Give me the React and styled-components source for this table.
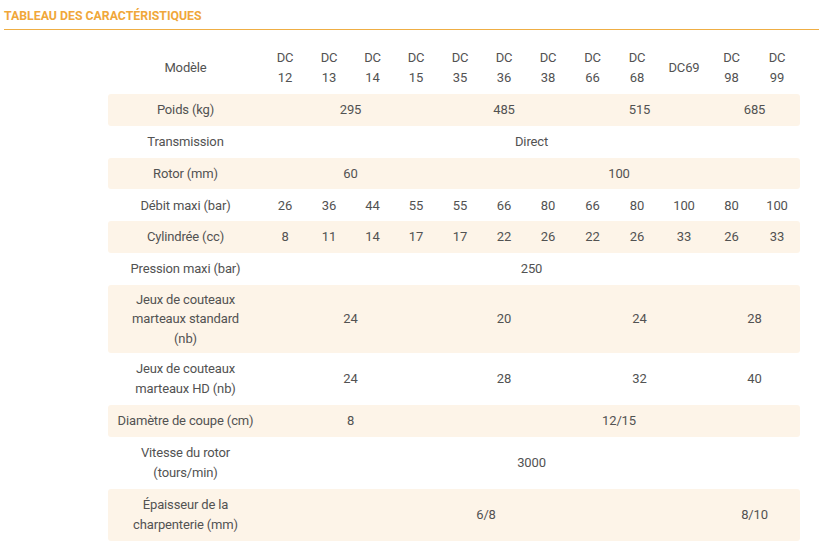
import React from "react";
import styled, { createGlobalStyle } from "styled-components";

const Global = createGlobalStyle`
  html, body { margin: 0; padding: 0; background: #fff; }
  body { font-family: Roboto, "Noto Sans", sans-serif; }
`;

const Page = styled.div`
  padding: 8px 0 0 4px;
`;

const Title = styled.h2`
  margin: 0;
  font-size: 12.3px;
  line-height: 16px;
  font-weight: 700;
  color: #f0a73a;
  padding-bottom: 5px;
  border-bottom: 1px solid #efae44;
`;

const Table = styled.table`
  margin: 13px 0 0 104px;
  width: 692px;
  table-layout: fixed;
  border-collapse: separate;
  border-spacing: 0;
  color: #525252;
  font-size: 13px;
  line-height: 19.5px;
  letter-spacing: -0.15px;
`;

const rowHeights = { 1: 23.8, 2: 44, 3: 60 };

const Row = styled.tr`
  & > td {
    height: ${(p) => rowHeights[p.$lines]}px;
    background: ${(p) => (p.$shade ? "#fdf4e8" : "transparent")};
  }
  & > td:first-child { border-radius: 3px 0 0 3px; }
  & > td:last-child { border-radius: 0 3px 3px 0; }
`;

const Cell = styled.td`
  text-align: center;
  vertical-align: middle;
  padding: 4px 2px;
`;

const Head = styled.th`
  text-align: center;
  vertical-align: middle;
  font-weight: 400;
  padding: 5px 0 7px;
`;

const Label = styled(Cell)`
  padding: 4px 4px;
`;

const models = [
  ["DC", "12"], ["DC", "13"], ["DC", "14"], ["DC", "15"], ["DC", "35"], ["DC", "36"],
  ["DC", "38"], ["DC", "66"], ["DC", "68"], ["DC69"], ["DC", "98"], ["DC", "99"],
];
const widths = [155, 44, 44, 43, 44, 44, 44, 44, 45, 44, 50, 45, 46];

const rows = [
  { label: ["Poids (kg)"], cells: [["295", 4], ["485", 3], ["515", 3], ["685", 2]] },
  { label: ["Transmission"], cells: [["Direct", 12]] },
  { label: ["Rotor (mm)"], cells: [["60", 4], ["100", 8]] },
  { label: ["Débit maxi (bar)"], cells: ["26", "36", "44", "55", "55", "66", "80", "66", "80", "100", "80", "100"].map((v) => [v, 1]) },
  { label: ["Cylindrée (cc)"], cells: ["8", "11", "14", "17", "17", "22", "26", "22", "26", "33", "26", "33"].map((v) => [v, 1]) },
  { label: ["Pression maxi (bar)"], cells: [["250", 12]] },
  { label: ["Jeux de couteaux", "marteaux standard", "(nb)"], cells: [["24", 4], ["20", 3], ["24", 3], ["28", 2]] },
  { label: ["Jeux de couteaux", "marteaux HD (nb)"], cells: [["24", 4], ["28", 3], ["32", 3], ["40", 2]] },
  { label: ["Diamètre de coupe (cm)"], cells: [["8", 4], ["12/15", 8]] },
  { label: ["Vitesse du rotor", "(tours/min)"], cells: [["3000", 12]] },
  { label: ["Épaisseur de la", "charpenterie (mm)"], cells: [["6/8", 10], ["8/10", 2]] },
];

const Lines = ({ parts }) =>
  parts.map((t, i) => (
    <React.Fragment key={i}>
      {i > 0 && <br />}
      {t}
    </React.Fragment>
  ));

export default function App() {
  return (
    <>
      <Global />
      <Page>
        <Title>TABLEAU DES CARACTÉRISTIQUES</Title>
        <Table>
          <colgroup>
            {widths.map((w, i) => (
              <col key={i} style={{ width: w }} />
            ))}
          </colgroup>
          <thead>
            <tr>
              <Head>Modèle</Head>
              {models.map((m, i) => (
                <Head key={i}>
                  <Lines parts={m} />
                </Head>
              ))}
            </tr>
          </thead>
          <tbody>
            {rows.map((r, i) => (
              <Row key={i} $shade={i % 2 === 0} $lines={r.label.length}>
                <Label>
                  <Lines parts={r.label} />
                </Label>
                {r.cells.map(([v, span], j) => (
                  <Cell key={j} colSpan={span}>
                    {v}
                  </Cell>
                ))}
              </Row>
            ))}
          </tbody>
        </Table>
      </Page>
    </>
  );
}
